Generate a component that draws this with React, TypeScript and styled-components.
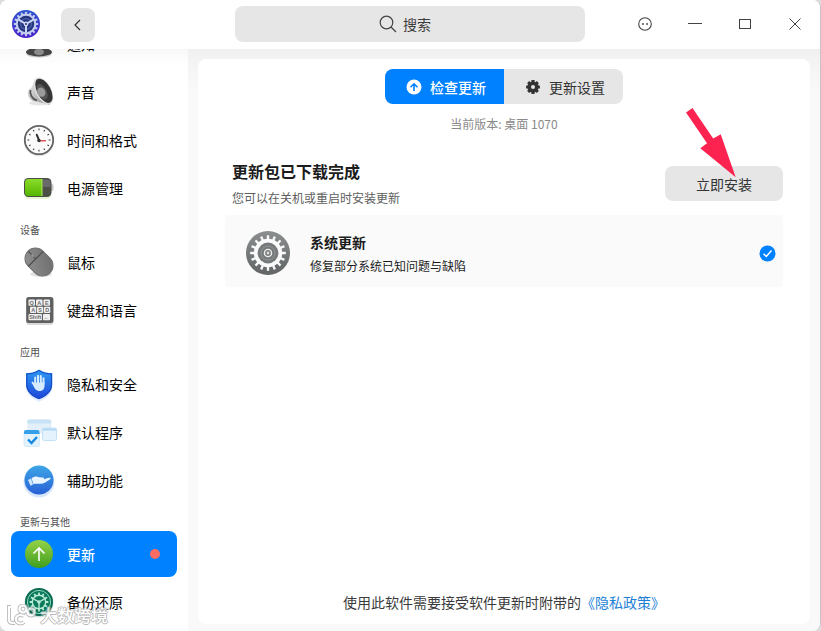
import React from "react";
import styled, { createGlobalStyle } from "styled-components";

const GlobalStyle = createGlobalStyle`
  *, *::before, *::after { box-sizing: border-box; }
  body {
    margin: 0;
    background: #dcdcdc;
    color: #1a1a1a;
    font-family: "Noto Sans CJK SC", "Noto Sans", sans-serif;
    font-size: 14px;
  }
  button, input { font: inherit; color: inherit; border: 0; padding: 0; background: none; }
  h1, h2, p, ul { margin: 0; padding: 0; }
  svg { display: block; flex: none; }
`;

const Window = styled.div`
  position: relative;
  display: flex;
  flex-direction: column;
  min-height: 100vh;
  overflow: hidden;
  background: #fff;
  border-right: 1px solid #c4c4c4;
  border-radius: 8px;
`;

const TitleBar = styled.header`
  position: relative;
  z-index: 1;
  display: grid;
  grid-template-columns: 1fr minmax(120px, 350px) 1fr;
  height: 49px;
  background: #fff;
`;

const TitleStart = styled.div`
  display: flex;
  align-items: flex-start;
  gap: 21px;
  padding: 8px 0 0 12px;
`;

const LogoBox = styled.div`
  padding-top: 2px;
`;

const BackButton = styled.button`
  display: grid;
  place-items: center;
  width: 34px;
  height: 34px;
  border-radius: 8px;
  background: #e6e6e6;
`;

const SearchBox = styled.label`
  display: flex;
  align-items: center;
  justify-content: center;
  gap: 6px;
  height: 36px;
  margin-top: 6px;
  padding-right: 10px;
  border-radius: 8px;
  background: #e6e6e6;
  color: #3c3c3c;
`;

const SearchInput = styled.input`
  field-sizing: content;
  min-width: 28px;
  max-width: 240px;
  outline: none;
  &::placeholder { color: #3c3c3c; opacity: 1; }
`;

const WindowControls = styled.div`
  display: flex;
  justify-content: flex-end;
`;

const WindowButton = styled.button`
  display: grid;
  place-items: center;
  width: 50px;
  height: 48px;
`;

const Body = styled.div`
  display: flex;
  flex: 1;
`;

const Sidebar = styled.nav`
  flex: 0 0 188px;
  overflow: hidden;
  padding: 0 11px;
  background: linear-gradient(#f8f8f8, #fff 16px);
`;

const NavScroll = styled.div`
  margin-top: -28px;
`;

const NavHeading = styled.h2`
  padding: 9px 9px 1px;
  font-size: 10px;
  font-weight: 400;
  line-height: 16px;
  color: #4f4f4f;
`;

const NavItem = styled.a<{ $active?: boolean }>`
  display: flex;
  align-items: center;
  gap: 10px;
  height: 46px;
  margin-bottom: 2px;
  padding: 0 17px 0 10px;
  border-radius: 8px;
  background: ${(p) => (p.$active ? "#0081ff" : "transparent")};
  color: ${(p) => (p.$active ? "#fff" : "#000")};
  font-weight: ${(p) => (p.$active ? 500 : 400)};
  line-height: 20px;
  text-decoration: none;
`;

const UnreadDot = styled.span`
  width: 10px;
  height: 10px;
  margin-left: auto;
  border-radius: 50%;
  background: #fb6c63;
`;

const Content = styled.main`
  display: flex;
  flex: 1;
  min-width: 0;
  padding: 10px 10px 7px 10px;
  background: linear-gradient(#f0f0f0, #f3f3f3 10px, #f9f9f9 40px);
`;

const Panel = styled.section`
  display: flex;
  flex: 1;
  flex-direction: column;
  min-width: 0;
  padding: 10px 27px;
  border-radius: 8px;
  background: #fff;
`;

const Tabs = styled.div`
  display: flex;
  align-self: center;
  overflow: hidden;
  border-radius: 8px;
`;

const Tab = styled.button<{ $active?: boolean }>`
  display: flex;
  align-items: center;
  justify-content: center;
  gap: 8px;
  width: 119px;
  height: 35px;
  padding-left: 3px;
  font-weight: ${(p) => (p.$active ? 500 : 400)};
  background: ${(p) => (p.$active ? "#0081ff" : "#e6e6e6")};
  color: ${(p) => (p.$active ? "#fff" : "#333")};
`;

const Version = styled.p`
  margin-top: 10px;
  text-align: center;
  font-size: 12px;
  line-height: 20px;
  color: #8a8a8a;
`;

const Summary = styled.div`
  display: flex;
  align-items: center;
  justify-content: space-between;
  margin-top: 25px;
  padding-left: 7px;
`;

const SummaryTitle = styled.h1`
  font-size: 16px;
  line-height: 24px;
  font-weight: 700;
  color: #1c1c1c;
`;

const SummaryNote = styled.p`
  margin-top: 5px;
  font-size: 12px;
  line-height: 20px;
  color: #5e5e5e;
`;

const InstallArea = styled.div`
  position: relative;
`;

const InstallButton = styled.button`
  width: 118px;
  height: 35px;
  border-radius: 8px;
  background: #e6e6e6;
  color: #333;
`;

const Pointer = styled.svg`
  position: absolute;
  left: 20px;
  top: -59px;
  pointer-events: none;
`;

const UpdateCard = styled.article`
  display: flex;
  align-items: center;
  gap: 19px;
  margin-top: 7px;
  padding: 8px 7px 4px 20px;
  min-height: 72px;
  border-radius: 4px;
  background: #fafafa;
`;

const UpdateText = styled.div`
  flex: 1;
  padding-top: 4px;
`;

const UpdateName = styled.h2`
  font-size: 14px;
  line-height: 22px;
  font-weight: 700;
  color: #1c1c1c;
`;

const UpdateNote = styled.p`
  font-size: 12px;
  line-height: 26px;
  color: #1c1c1c;
`;

const Agreement = styled.p`
  margin-top: auto;
  padding-bottom: 1px;
  text-align: center;
  line-height: 22px;
  color: #3a3a3a;
`;

const PolicyLink = styled.a`
  color: #1c7fd6;
  text-decoration: none;
`;

const Watermark = styled.div`
  position: absolute;
  left: 7px;
  bottom: 4px;
  display: flex;
  align-items: center;
  gap: 4px;
  font-size: 17px;
  font-weight: 500;
  line-height: 24px;
  color: #fff;
  opacity: 0.8;
  text-shadow: 1px 0 #aaa, -1px 0 #aaa, 0 1px #aaa, 0 -1px #aaa;
  pointer-events: none;
`;

type GearProps = { cx: number; cy: number; r: number; teeth: number; tooth: number; length: number; color: string };

function Gear({ cx, cy, r, teeth, tooth, length, color }: GearProps) {
  return (
    <g fill={color}>
      <circle cx={cx} cy={cy} r={r} />
      {Array.from({ length: teeth }, (_, i) => (
        <rect
          key={i}
          x={cx - tooth / 2}
          y={cy - r - length}
          width={tooth}
          height={length + 1}
          rx={0.5}
          transform={`rotate(${(360 / teeth) * i} ${cx} ${cy})`}
        />
      ))}
    </g>
  );
}

function Spokes({ cx, cy, r, color, width }: { cx: number; cy: number; r: number; color: string; width: number }) {
  return (
    <g stroke={color} strokeWidth={width}>
      {[60, 180, 300].map((a) => (
        <path key={a} d={`M${cx} ${cy}V${cy - r}`} transform={`rotate(${a} ${cx} ${cy})`} />
      ))}
    </g>
  );
}

const AppLogo = () => (
  <svg width="28" height="28" viewBox="0 0 28 28" aria-hidden="true">
    <defs>
      <linearGradient id="logo" x1="0" y1="0" x2="0" y2="1">
        <stop offset="0" stopColor="#2d55cf" />
        <stop offset="1" stopColor="#4a22c8" />
      </linearGradient>
    </defs>
    <circle cx="14" cy="14" r="14" fill="url(#logo)" />
    <Gear cx={14} cy={14} r={10.4} teeth={16} tooth={2} length={1.8} color="#c3cdf0" />
    <circle cx="14" cy="14" r="8.2" fill="#26357f" />
    <circle cx="14" cy="14" r="5.4" fill="none" stroke="#4c5da8" strokeWidth="1.4" />
    <Spokes cx={14} cy={14} r={8.6} color="#cfd8f5" width={2} />
    <circle cx="14" cy="14" r="2.4" fill="#cfd8f5" />
    <circle cx="14" cy="14" r="1" fill="#26357f" />
  </svg>
);

const IconFrame = ({ children }: { children: React.ReactNode }) => (
  <svg width="36" height="36" viewBox="0 0 36 36" overflow="visible" aria-hidden="true">{children}</svg>
);

const NoticeIcon = () => (
  <IconFrame>
    <ellipse cx="18" cy="28" rx="12.5" ry="3.5" fill="#c9c9c9" />
    <ellipse cx="18" cy="26" rx="13" ry="4.4" fill="#444" />
    <ellipse cx="18" cy="26" rx="5" ry="3.2" fill="#8a8a8a" />
  </IconFrame>
);

const SoundIcon = () => (
  <IconFrame>
    <defs>
      <linearGradient id="snd" x1="0" y1="0" x2="1" y2="1">
        <stop offset="0" stopColor="#f4f4f4" />
        <stop offset="1" stopColor="#8b8b8b" />
      </linearGradient>
    </defs>
    <ellipse cx="19" cy="29" rx="11" ry="2.5" fill="#000" opacity="0.1" />
    <path d="M14.5 4C12 8 12.5 13 8 15.5 5.5 18 7 25 12 27 17 27.5 22 29 29 31Z" fill="url(#snd)" />
    <path d="M9.5 16C8.5 20 11 25 16 26.5" fill="none" stroke="#555" strokeWidth="1.8" />
    <g transform="rotate(-28 22.5 17)">
      <ellipse cx="22.5" cy="17" rx="8" ry="14.6" fill="#dedede" />
      <ellipse cx="23" cy="17" rx="6.8" ry="13.2" fill="#363636" />
      <ellipse cx="21" cy="17" rx="4.4" ry="8.5" fill="#545454" />
      <ellipse cx="20" cy="17" rx="4" ry="4.8" fill="#9b9b9b" />
    </g>
  </IconFrame>
);

const ClockIcon = () => (
  <IconFrame>
    <circle cx="18" cy="19.5" r="15" fill="#000" opacity="0.1" />
    <circle cx="18" cy="18" r="14.2" fill="#fbfbfb" stroke="#646464" strokeWidth="1.8" />
    {Array.from({ length: 12 }, (_, i) => (
      <path key={i} d="M18 6.5V8.3" stroke="#333" strokeWidth="1" transform={`rotate(${i * 30} 18 18)`} />
    ))}
    <path d="M15.8 12.8L18 18.2" stroke="#333" strokeWidth="2" strokeLinecap="round" />
    <path d="M18 18.7H25" stroke="#e25252" strokeWidth="1.6" />
    <circle cx="18" cy="18.5" r="1.7" fill="#333" />
  </IconFrame>
);

const BatteryIcon = () => (
  <IconFrame>
    <defs>
      <linearGradient id="bat" x1="0" y1="0" x2="0" y2="1">
        <stop offset="0" stopColor="#8bdc2a" />
        <stop offset="1" stopColor="#54b500" />
      </linearGradient>
    </defs>
    <rect x="4" y="12" width="26" height="17" rx="4" fill="#79c82e" opacity="0.2" />
    <rect x="29" y="14" width="3.5" height="7" rx="1.5" fill="#c9c9c9" />
    <rect x="3" y="8" width="27.5" height="19" rx="4.5" fill="#4b4f45" />
    <path d="M21 9H7.5A3.5 3.5 0 0 0 4 12.5V22.5A3.5 3.5 0 0 0 7.5 26H21Z" fill="url(#bat)" />
    <path d="M21 9V26" stroke="#b6ea69" />
    <path d="M22 9.5H26.5A3 3 0 0 1 29.5 12.5V17H22Z" fill="#696969" />
  </IconFrame>
);

const MouseIcon = () => (
  <IconFrame>
    <defs>
      <linearGradient id="mouse" x1="0" y1="0" x2="1" y2="1">
        <stop offset="0" stopColor="#929292" />
        <stop offset="1" stopColor="#6b6b6b" />
      </linearGradient>
    </defs>
    <ellipse cx="20" cy="30" rx="11" ry="3" fill="#000" opacity="0.12" />
    <g transform="rotate(-45 18 18)">
      <rect x="7.500" y="2.500" width="21" height="31" rx="10.500" fill="url(#mouse)" stroke="#707070" />
      <path d="M7.500 13.500H28.500M18 3V13.500" fill="none" stroke="#4d4d4d" strokeWidth="1.200" />
      <path d="M18 7.500V10.500" stroke="#9b9b9b" strokeWidth="1.500" />
    </g>
  </IconFrame>
);

const keys = [
  { x: 7.5, y: 7.5, w: 6.5, t: "Q" }, { x: 15, y: 7.5, w: 6.5, t: "A" }, { x: 22.5, y: 7.5, w: 6.5, t: "E" },
  { x: 9, y: 14.8, w: 6.3, t: "A" }, { x: 16, y: 14.8, w: 6.3, t: "S" }, { x: 23, y: 14.8, w: 6.3, t: "D" },
  { x: 7.5, y: 22, w: 13.5, t: "Shift" }, { x: 22, y: 22, w: 7, t: "←" },
];

const KeyboardIcon = () => (
  <IconFrame>
    <rect x="5" y="7" width="27.5" height="26" rx="3" fill="#000" opacity="0.15" />
    <rect x="5.2" y="5" width="27.2" height="26" rx="2.5" fill="#606060" />
    {keys.map((k, i) => (
      <g key={i}>
        <rect x={k.x} y={k.y} width={k.w} height="6.2" rx="1" fill="#f1f1f1" />
        <text x={k.x + k.w / 2} y={k.y + 5.1} fontSize="5.5" fontFamily="Liberation Sans" fontWeight="700" textAnchor="middle" fill="#6a6a6a">{k.t}</text>
      </g>
    ))}
  </IconFrame>
);

const ShieldIcon = () => (
  <IconFrame>
    <defs>
      <linearGradient id="shield" x1="0" y1="0" x2="0" y2="1">
        <stop offset="0" stopColor="#2b9bf5" />
        <stop offset="1" stopColor="#1f45d8" />
      </linearGradient>
    </defs>
    <path d="M18 6C22 9 27 9 31 9V21C31 29 24 33 18 36 12 33 5 29 5 21V9C9 9 14 9 18 6Z" fill="#3685f0" opacity="0.15" />
    <path d="M18 3.5C22 6.5 27 7 31.3 7V18.5C31.3 26 25 31 18 33.2 11 31 5 26 5 18.5V7C9 7 14 6.5 18 3.5Z" fill="url(#shield)" />
    <path d="M18 4.5C22 7.3 26.5 7.8 30.4 7.9V18.5C30.4 25.4 24.5 30.2 18 32.2 11.5 30.2 5.9 25.4 5.9 18.5V7.9C9.5 7.8 14 7.3 18 4.5Z" fill="none" stroke="#1747c0" strokeWidth="1" />
    <g stroke="#d5ebff" strokeWidth="2" strokeLinecap="round" fill="none">
      <path d="M14.2 18V11.5M17 17V9.8M19.8 17V10M22.5 18V12.2M11.5 16.5L14.2 20.5" />
    </g>
    <path d="M13.2 16.5H23.5V20C23.5 23 21.5 25 18.5 25 15.5 25 13.2 22.5 12.5 19.5Z" fill="#d5ebff" />
  </IconFrame>
);

const DefaultsIcon = () => (
  <IconFrame>
    <rect x="6.3" y="5.5" width="24" height="14" rx="2" fill="#e3f0fa" />
    <path d="M6.3 9.5V7.5A2 2 0 0 1 8.3 5.5H28.3A2 2 0 0 1 30.3 7.5V9.5Z" fill="#c8e3f6" />
    <rect x="21.5" y="14" width="14" height="12.5" rx="2" fill="#e4f2fd" stroke="#c3e1f6" />
    <path d="M21.5 15.5H35.5" stroke="#b0d7f3" strokeWidth="2" />
    <rect x="3" y="17" width="15.5" height="15.5" rx="1.5" fill="#e1f2fd" stroke="#cfe7f8" strokeWidth="0.8" />
    <path d="M3 20V18A2 2 0 0 1 5 16H16.5A2 2 0 0 1 18.5 18V20Z" fill="#35a0ea" />
    <path d="M7 25.5L10.5 29L16 23" fill="none" stroke="#1689e2" strokeWidth="2.4" />
  </IconFrame>
);

const AssistIcon = () => (
  <IconFrame>
    <defs>
      <linearGradient id="assist" x1="0" y1="0" x2="0" y2="1">
        <stop offset="0" stopColor="#3da6e6" />
        <stop offset="1" stopColor="#2860d6" />
      </linearGradient>
    </defs>
    <circle cx="18" cy="20" r="15.5" fill="#3b80f0" opacity="0.2" />
    <circle cx="18" cy="18" r="14.5" fill="url(#assist)" />
    <path d="M7 18L10 16.5 12 22.5 9.5 23.8Z" fill="#cfe6fb" />
    <path d="M10.5 16.2C13 14.5 15.5 13.8 18 15.2L22 15.5C23.5 15.7 23.3 17.3 22 17.5 24.5 17 27 15.2 29.3 15.8 30 16.2 29.5 17 28.8 17.4 25.5 19.5 23 21.5 19.5 21.8 17 22 14.5 21.3 12.5 22.3Z" fill="#e8f4ff" />
  </IconFrame>
);

const UpdateIcon = () => (
  <IconFrame>
    <defs>
      <linearGradient id="upd" x1="0" y1="0" x2="0" y2="1">
        <stop offset="0" stopColor="#94d346" />
        <stop offset="1" stopColor="#419d20" />
      </linearGradient>
    </defs>
    <circle cx="18" cy="18" r="14" fill="url(#upd)" />
    <path d="M18 25V12M12.5 17.5L18 12L23.5 17.5" fill="none" stroke="#fff" strokeWidth="1.6" />
  </IconFrame>
);

const BackupIcon = () => (
  <IconFrame>
    <circle cx="18" cy="19" r="14.5" fill="#0e6b5d" opacity="0.2" />
    <circle cx="18" cy="18" r="14" fill="#0b6a52" />
    <circle cx="18" cy="18" r="11.6" fill="#0b7a5c" stroke="#8fd9bc" strokeWidth="1" />
    <Gear cx={18} cy={18} r={7.4} teeth={12} tooth={1.8} length={2} color="#b9ecd6" />
    <circle cx="18" cy="18" r="6" fill="#0d7a5d" />
    <Spokes cx={18} cy={18} r={6.4} color="#b9ecd6" width={1.4} />
    <circle cx="18" cy="18" r="1.8" fill="#b9ecd6" />
  </IconFrame>
);

const SystemIcon = () => (
  <svg width="46" height="46" viewBox="0 0 46 46" aria-hidden="true">
    <defs>
      <linearGradient id="sys" x1="0" y1="0" x2="0" y2="1">
        <stop offset="0" stopColor="#8b8e8e" />
        <stop offset="1" stopColor="#626565" />
      </linearGradient>
    </defs>
    <circle cx="23" cy="23" r="22" fill="url(#sys)" />
    <Gear cx={23} cy={23} r={14.2} teeth={16} tooth={2.4} length={3.6} color="#fafafa" />
    <circle cx="23" cy="23" r="10.4" fill="#777a7a" />
    <circle cx="23" cy="23" r="7" fill="none" stroke="#939696" strokeWidth="1" />
    <circle cx="23" cy="23" r="3.6" fill="none" stroke="#eee" strokeWidth="1.4" />
    <circle cx="23" cy="23" r="1.4" fill="#ddd" />
  </svg>
);

const groups = [
  {
    items: [
      { label: "通知", Icon: NoticeIcon },
      { label: "声音", Icon: SoundIcon },
      { label: "时间和格式", Icon: ClockIcon },
      { label: "电源管理", Icon: BatteryIcon },
    ],
  },
  { heading: "设备", items: [{ label: "鼠标", Icon: MouseIcon }, { label: "键盘和语言", Icon: KeyboardIcon }] },
  {
    heading: "应用",
    items: [
      { label: "隐私和安全", Icon: ShieldIcon },
      { label: "默认程序", Icon: DefaultsIcon },
      { label: "辅助功能", Icon: AssistIcon },
    ],
  },
  {
    heading: "更新与其他",
    items: [{ label: "更新", Icon: UpdateIcon, active: true }, { label: "备份还原", Icon: BackupIcon }],
  },
] as { heading?: string; items: { label: string; Icon: () => React.ReactElement; active?: boolean }[] }[];

export default function App() {
  return (
    <>
      <GlobalStyle />
      <Window>
        <TitleBar>
          <TitleStart>
            <LogoBox><AppLogo /></LogoBox>
            <BackButton aria-label="返回">
              <svg width="12" height="12" viewBox="0 0 12 12" fill="none" stroke="#333" strokeWidth="1.2">
                <path d="M8 1L3 6L8 11" />
              </svg>
            </BackButton>
          </TitleStart>
          <SearchBox>
            <svg width="18" height="18" viewBox="0 0 18 18" fill="none" stroke="#444" strokeWidth="1.2" aria-hidden="true">
              <circle cx="7.5" cy="7.5" r="6.3" />
              <path d="M12 12L17 17" />
            </svg>
            <SearchInput type="text" placeholder="搜索" aria-label="搜索" />
          </SearchBox>
          <WindowControls>
            <WindowButton aria-label="菜单">
              <svg width="14" height="14" viewBox="0 0 14 14" fill="none" stroke="#444" strokeWidth="1.1">
                <circle cx="7" cy="7" r="6.3" />
                <path d="M4 7H5.8M8.2 7H10" strokeWidth="1.6" />
              </svg>
            </WindowButton>
            <WindowButton aria-label="最小化">
              <svg width="14" height="14" viewBox="0 0 14 14" stroke="#444"><path d="M0 6.5H14" /></svg>
            </WindowButton>
            <WindowButton aria-label="最大化">
              <svg width="14" height="14" viewBox="0 0 14 14" fill="none" stroke="#444"><rect x="1.5" y="2.5" width="11" height="9" /></svg>
            </WindowButton>
            <WindowButton aria-label="关闭">
              <svg width="14" height="14" viewBox="0 0 14 14" stroke="#444"><path d="M1.5 1.5L12.5 12.5M12.5 1.5L1.5 12.5" /></svg>
            </WindowButton>
          </WindowControls>
        </TitleBar>
        <Body>
          <Sidebar aria-label="设置">
            <NavScroll>
              {groups.map((g, i) => (
                <React.Fragment key={i}>
                  {g.heading && <NavHeading>{g.heading}</NavHeading>}
                  {g.items.map(({ label, Icon, active }) => (
                    <NavItem key={label} href="#" $active={active} aria-current={active ? "page" : undefined}>
                      <Icon />
                      {label}
                      {active && <UnreadDot />}
                    </NavItem>
                  ))}
                </React.Fragment>
              ))}
            </NavScroll>
          </Sidebar>
          <Content>
            <Panel>
              <Tabs>
                <Tab $active>
                  <svg width="16" height="16" viewBox="0 0 16 16" aria-hidden="true">
                    <circle cx="8" cy="8" r="7.5" fill="#fff" />
                    <path d="M8 12V5M4.5 8.3L8 4.8L11.5 8.3" fill="none" stroke="#0081ff" strokeWidth="1.6" />
                  </svg>
                  检查更新
                </Tab>
                <Tab>
                  <svg width="16" height="16" viewBox="0 0 16 16" aria-hidden="true">
                    <Gear cx={8} cy={8} r={5.6} teeth={8} tooth={3.2} length={1.3} color="#333" />
                    <circle cx="8" cy="8" r="2" fill="#e6e6e6" />
                  </svg>
                  更新设置
                </Tab>
              </Tabs>
              <Version>当前版本: 桌面 1070</Version>
              <Summary>
                <div>
                  <SummaryTitle>更新包已下载完成</SummaryTitle>
                  <SummaryNote>您可以在关机或重启时安装更新</SummaryNote>
                </div>
                <InstallArea>
                  <InstallButton>立即安装</InstallButton>
                  <Pointer width="52" height="72" viewBox="0 0 52 72" aria-hidden="true">
                    <path d="M1 5.5L7.5 1L28.2 31.6L35.7 27.2L50.7 70.3L15.3 41.3L22 36.3Z" fill="#fd2350" />
                  </Pointer>
                </InstallArea>
              </Summary>
              <UpdateCard>
                <SystemIcon />
                <UpdateText>
                  <UpdateName>系统更新</UpdateName>
                  <UpdateNote>修复部分系统已知问题与缺陷</UpdateNote>
                </UpdateText>
                <svg width="17" height="17" viewBox="0 0 17 17" role="img" aria-label="已选择">
                  <circle cx="8.5" cy="8.5" r="8" fill="#0081ff" />
                  <path d="M4.5 8.8L7.3 11.5L12.5 5.5" fill="none" stroke="#fff" strokeWidth="1.5" />
                </svg>
              </UpdateCard>
              <Agreement>
                使用此软件需要接受软件更新时附带的<PolicyLink href="#">《隐私政策》</PolicyLink>
              </Agreement>
            </Panel>
          </Content>
        </Body>
        <Watermark>
          <svg width="29" height="22" viewBox="0 0 29 22" fill="none" aria-hidden="true">
            <g stroke="#aaa" strokeWidth="4">
              <path d="M4 3H2V16Q2 19 6 19H8M17 12C11 9 7 14 10 18 12 20 15 20 17 18" />
              <circle cx="16" cy="5" r="3.5" />
              <circle cx="24" cy="8" r="3.5" />
            </g>
            <g stroke="#fff" strokeWidth="2.2">
              <path d="M4 3H2V16Q2 19 6 19H8M17 12C11 9 7 14 10 18 12 20 15 20 17 18" />
              <circle cx="16" cy="5" r="3.5" />
              <circle cx="24" cy="8" r="3.5" />
            </g>
          </svg>
          大数跨境
        </Watermark>
      </Window>
    </>
  );
}
